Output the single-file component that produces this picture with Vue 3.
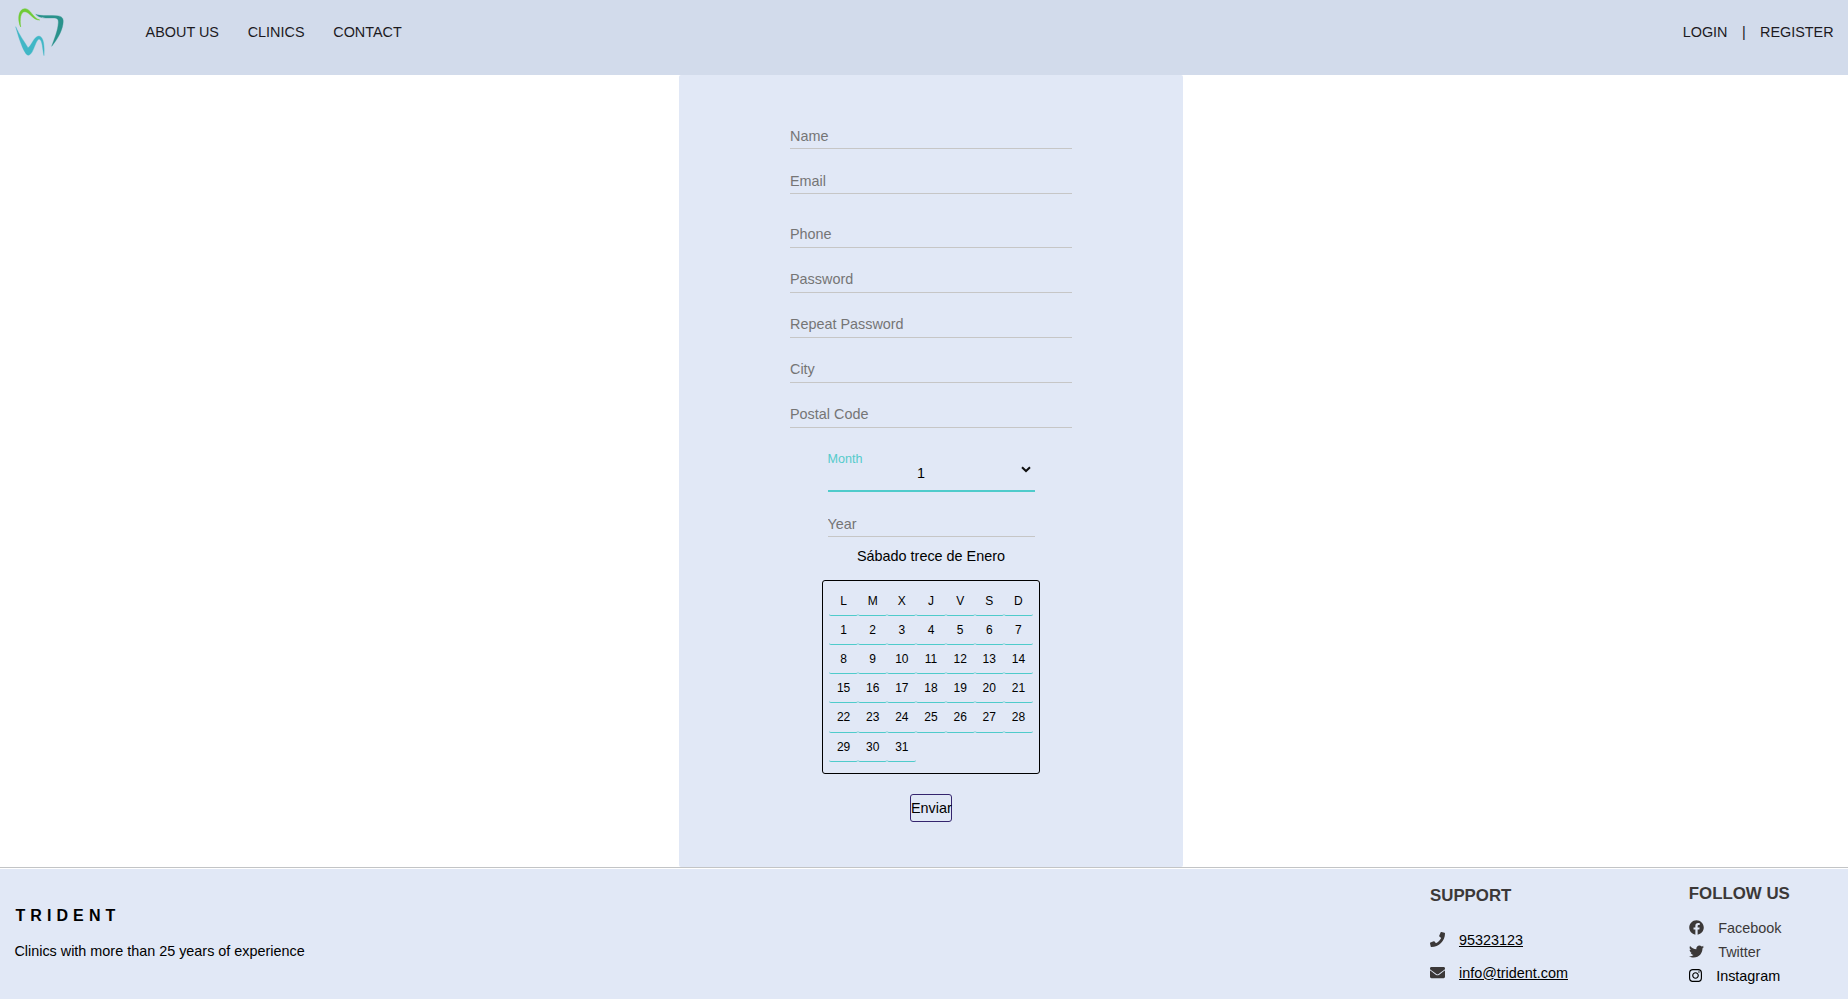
<script setup>
const mainNav = ['ABOUT US', 'CLINICS', 'CONTACT']
const fields = [
  { label: 'Name', type: 'text' },
  { label: 'Email', type: 'email' },
  { label: 'Phone', type: 'text', spaced: true, raised: true },
  { label: 'Password', type: 'password', raised: true },
  { label: 'Repeat Password', type: 'password', raised: true },
  { label: 'City', type: 'text', raised: true },
  { label: 'Postal Code', type: 'text', raised: true },
]
const weekdays = ['L', 'M', 'X', 'J', 'V', 'S', 'D']
const days = Array.from({ length: 31 }, (_, i) => i + 1)
</script>

<template>
  <div class="page">
    <header class="header">
      <svg class="logo" viewBox="0 0 192 192" width="64" height="64">
        <path fill="#6fcb35" stroke="#6fcb35" stroke-width="1.5" d="M38 81C29 62 29 27 51 26C68 26 74 54 95 60C76 61 66 37 51 35C37 35 35 58 38 81Z" />
        <path fill="#2a928c" stroke="#2a928c" stroke-width="1" d="M83 43C96 48 113 46 145 47C163 48 168 55 165 72C161 98 146 120 131 139C139 116 150 91 151 68C152 55 145 54 132 54C112 54 96 56 83 43Z" />
        <path fill="#40b7c6" stroke="#40b7c6" stroke-width="1" d="M23 80C34 105 48 123 60 143C70 139 77 109 93 108C108 109 110 144 108 167C103 149 104 119 93 117C82 121 76 165 61 166C48 164 31 110 23 80Z" />
      </svg>
      <nav class="nav">
        <a v-for="n in mainNav" :key="n">{{ n }}</a>
      </nav>
      <nav class="account">
        <a>LOGIN</a><span>|</span><a>REGISTER</a>
      </nav>
    </header>

    <main class="main">
      <form class="panel" @submit.prevent>
        <input
          v-for="f in fields"
          :key="f.label"
          class="field"
          :class="{ spaced: f.spaced, raised: f.raised }"
          :type="f.type"
          :placeholder="f.label"
        />
        <div class="month">
          <label class="month-label">Month</label>
          <div class="month-value">1</div>
          <svg class="chevron" viewBox="0 0 10 7" width="10" height="7">
            <path d="M1 1.2L5 5L9 1.2" fill="none" stroke="#101010" stroke-width="2" />
          </svg>
        </div>
        <input class="field year" type="text" placeholder="Year" />
        <div class="date">Sábado trece de Enero</div>
        <div class="calendar">
          <div v-for="w in weekdays" :key="w" class="cell">{{ w }}</div>
          <div v-for="d in days" :key="d" class="cell">{{ d }}</div>
        </div>
        <button class="send">Enviar</button>
      </form>
    </main>

    <footer class="footer">
      <section class="brand">
        <h3>TRIDENT</h3>
        <p>Clinics with more than 25 years of experience</p>
      </section>
      <section class="support">
        <h3>SUPPORT</h3>
        <div class="contact">
          <svg viewBox="0 0 512 512" width="15" height="15"><path d="M493.4 24.6l-104-24c-11.3-2.6-22.9 3.3-27.5 13.9l-48 112c-4.2 9.8-1.4 21.3 6.9 28l60.6 49.6c-36 76.7-98.9 140.5-177.2 177.2l-49.6-60.6c-6.8-8.3-18.2-11.1-28-6.9l-112 48C3.9 366.5-2 378.1.6 389.4l24 104C27.1 504.2 36.7 512 48 512c256.1 0 464-207.5 464-464 0-11.2-7.7-20.9-18.6-23.4z" /></svg>
          <a>95323123</a>
        </div>
        <div class="contact">
          <svg viewBox="0 0 512 512" width="15" height="15"><path d="M502.3 190.8c3.9-3.1 9.7-.2 9.7 4.7V400c0 26.5-21.5 48-48 48H48c-26.5 0-48-21.5-48-48V195.6c0-5 5.7-7.8 9.7-4.7 22.4 17.4 52.1 39.5 154.1 113.6 21.1 15.4 56.7 47.8 92.2 47.6 35.7.3 72-32.8 92.3-47.6 102-74.1 131.6-96.3 154-113.7zM256 320c23.2.4 56.6-29.2 73.4-41.4 132.7-96.3 142.8-104.7 173.4-128.7 5.8-4.5 9.2-11.5 9.2-18.9v-19c0-26.5-21.5-48-48-48H48c-26.5 0-48 21.5-48 48v19c0 7.4 3.4 14.3 9.2 18.9 30.6 23.9 40.7 32.4 173.4 128.7 16.8 12.2 50.2 41.8 73.4 41.4z" /></svg>
          <a>info@trident.com</a>
        </div>
      </section>
      <section class="social">
        <h3>FOLLOW US</h3>
        <div class="network">
          <svg viewBox="0 0 512 512" width="15" height="15"><path d="M504 256C504 119 393 8 256 8S8 119 8 256c0 123.780 90.690 226.380 209.250 245V327.690h-63V256h63v-54.640c0-62.150 37-96.480 93.670-96.480 27.140 0 55.520 4.840 55.520 4.840v61h-31.280c-30.800 0-40.410 19.120-40.410 38.730V256h68.780l-11 71.690h-57.780V501C413.310 482.380 504 379.780 504 256z" /></svg>
          <a>Facebook</a>
        </div>
        <div class="network">
          <svg viewBox="0 0 512 512" width="15" height="15"><path d="M459.370 151.716c.325 4.548.325 9.097.325 13.645 0 138.720-105.583 298.558-298.558 298.558-59.452 0-114.680-17.219-161.137-47.106 8.447.974 16.568 1.299 25.340 1.299 49.055 0 94.213-16.568 130.274-44.832-46.132-.975-84.792-31.188-98.112-72.772 6.498.974 12.995 1.624 19.818 1.624 9.421 0 18.843-1.300 27.614-3.573-48.081-9.747-84.143-51.980-84.143-102.985v-1.299c13.969 7.797 30.214 12.670 47.431 13.319-28.264-18.843-46.781-51.005-46.781-87.391 0-19.492 5.197-37.360 14.294-52.954 51.655 63.675 129.300 105.258 216.365 109.807-1.624-7.797-2.599-15.918-2.599-24.040 0-57.828 46.782-104.934 104.934-104.934 30.213 0 57.502 12.670 76.670 33.137 23.715-4.548 46.456-13.320 66.599-25.340-7.798 24.366-24.366 44.833-46.132 57.827 21.117-2.273 41.584-8.122 60.426-16.243-14.292 20.791-32.161 39.308-52.628 54.253z" /></svg>
          <a>Twitter</a>
        </div>
        <div class="network dark">
          <svg viewBox="0 0 448 512" width="13" height="15"><path d="M224.100 141c-63.600 0-114.900 51.300-114.900 114.900s51.300 114.900 114.900 114.900S339 319.500 339 255.900 287.700 141 224.100 141zm0 189.600c-41.100 0-74.700-33.500-74.700-74.700s33.500-74.700 74.700-74.700 74.700 33.500 74.700 74.700-33.600 74.700-74.700 74.700zm146.400-194.300c0 14.900-12 26.800-26.800 26.800-14.900 0-26.800-12-26.800-26.800s12-26.800 26.800-26.800 26.800 12 26.800 26.800zm76.100 27.200c-1.700-35.900-9.900-67.700-36.200-93.900-26.200-26.200-58-34.400-93.900-36.200-37-2.100-147.900-2.100-184.900 0-35.800 1.700-67.600 9.900-93.900 36.100s-34.400 58-36.200 93.900c-2.100 37-2.100 147.900 0 184.900 1.700 35.900 9.900 67.700 36.200 93.900s58 34.400 93.900 36.200c37 2.100 147.900 2.100 184.900 0 35.900-1.700 67.700-9.900 93.900-36.200 26.200-26.200 34.400-58 36.200-93.900 2.100-37 2.100-147.800 0-184.800zM398.800 388c-7.800 19.600-22.900 34.700-42.600 42.600-29.500 11.700-99.500 9-132.100 9s-102.700 2.600-132.100-9c-19.600-7.800-34.700-22.900-42.600-42.600-11.700-29.500-9-99.500-9-132.100s-2.600-102.700 9-132.100c7.800-19.600 22.900-34.700 42.600-42.600 29.500-11.700 99.500-9 132.100-9s102.700-2.600 132.100 9c19.600 7.800 34.700 22.900 42.600 42.600 11.700 29.500 9 99.500 9 132.100s2.700 102.700-9 132.100z" /></svg>
          <a>Instagram</a>
        </div>
      </section>
    </footer>
  </div>
</template>

<style>
body {
  margin: 0;
  overflow: hidden;
}
</style>

<style scoped>
.page {
  display: flex;
  flex-direction: column;
  height: 999px;
  background: #fff;
  color: #000;
  font-family: 'Liberation Sans', Arial, sans-serif;
  font-size: 14.4px;
  line-height: 20px;
}
.page * {
  box-sizing: border-box;
}
.header {
  display: flex;
  align-items: flex-start;
  flex: none;
  height: 75px;
  padding: 0 14.4px 0 8px;
  background: #d2dbeb;
  color: #1c1a1e;
}
.logo {
  flex: none;
}
.nav {
  display: flex;
  gap: 28.8px;
  margin: 22px 0 0 73.6px;
}
.account {
  display: flex;
  gap: 14.4px;
  margin: 22px 0 0 auto;
}
.main {
  flex: none;
  height: 792px;
  padding-left: 679px;
}
.panel {
  display: flex;
  flex-direction: column;
  align-items: center;
  width: 504px;
  height: 792px;
  padding-top: 29px;
  border-radius: 2px;
  background: #e1e8f6;
}
.field {
  flex: none;
  width: 282px;
  height: 45px;
  padding: 20px 0 0;
  border: 0;
  border-bottom: 1px solid #c6c6c6;
  border-radius: 0;
  outline: 0;
  background: transparent;
  font: inherit;
}
.field::placeholder {
  color: #757575;
  opacity: 1;
}
.field.raised {
  padding: 19px 0 1px;
}
.field.spaced {
  margin-top: 9px;
}
.month {
  display: grid;
  grid-template-columns: 1fr 14px;
  grid-template-rows: 14px 18px;
  align-items: center;
  flex: none;
  width: 207px;
  height: 42px;
  margin-top: 22px;
  border-bottom: 2px solid #4fcbcb;
}
.month-label {
  grid-column: 1 / 3;
  align-self: start;
  padding-top: 1px;
  color: #55cbcb;
  font-size: 12.6px;
  line-height: 16px;
}
.month-value {
  padding-right: 6px;
  text-align: center;
  line-height: 18px;
}
.chevron {
  margin-top: -7px;
}
.year {
  width: 207px;
}
.date {
  margin-top: 9px;
  line-height: 20px;
}
.calendar {
  display: grid;
  grid-template-columns: repeat(7, 1fr);
  grid-auto-rows: 29.2px;
  flex: none;
  width: 218px;
  height: 194px;
  margin-top: 14px;
  padding: 5.7px 6px 0;
  border: 1px solid #000;
  border-radius: 3px;
  font-size: 12px;
}
.cell {
  border-bottom: 1px solid #4fcbcb;
  border-radius: 2px;
  text-align: center;
  line-height: 29px;
}
.send {
  flex: none;
  width: 42px;
  height: 28px;
  margin-top: 20px;
  padding: 0;
  border: 1px solid #35256e;
  border-radius: 3px;
  background: transparent;
  color: #000;
  font: inherit;
  white-space: nowrap;
}
.footer {
  display: flex;
  flex: 1;
  margin-top: 1px;
  border-top: 1px solid #fff;
  padding-left: 14.4px;
  background: #e1e8f6;
  box-shadow: 0 -1px 0 #c2c4c6;
}
h3,
p {
  margin: 0;
}
h3 {
  font-size: 16.85px;
  line-height: 20px;
}
.brand {
  width: 1415.6px;
  padding-top: 37px;
}
.brand h3 {
  padding-left: 1px;
  font-size: 16px;
  letter-spacing: 5.1px;
}
.brand p {
  margin-top: 15px;
}
.support {
  width: 258.8px;
  padding-top: 17px;
  color: #3b3838;
}
.support h3 {
  margin-bottom: 17px;
}
.contact {
  display: flex;
  align-items: center;
  gap: 14px;
  height: 33px;
}
.contact a {
  color: #000;
  text-decoration: underline;
}
.social {
  padding-top: 15px;
  color: #3b3838;
}
.social h3 {
  margin-bottom: 12px;
}
.network {
  display: flex;
  align-items: center;
  gap: 14.4px;
  height: 24px;
}
.network.dark {
  color: #000;
}
.contact svg,
.network svg {
  flex: none;
  fill: currentColor;
}
.network svg {
  margin-top: -1px;
}
</style>
